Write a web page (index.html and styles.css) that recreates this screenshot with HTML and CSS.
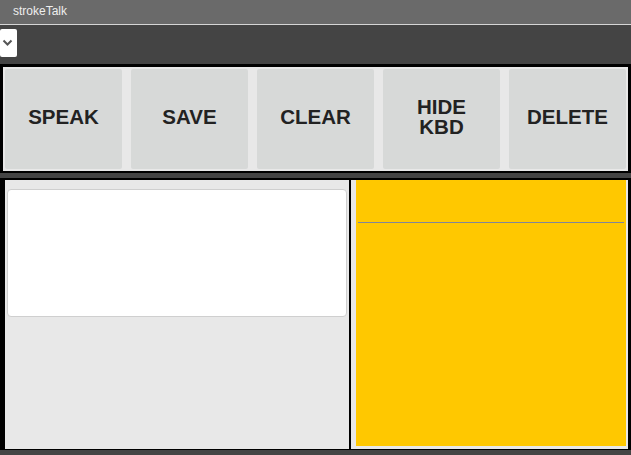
FILE: index.html
```html
<!DOCTYPE html>
<html>
<head>
<meta charset="utf-8">
<title>strokeTalk</title>
<link rel="stylesheet" href="styles.css">
</head>
<body>
<div class="app">
  <div class="titlebar">strokeTalk</div>
  <div class="toolbar">
    <div class="select">
      <svg width="17" height="28" viewBox="0 0 17 28"><polyline points="3.5,11.5 7.5,15.5 11.5,11.5" fill="none" stroke="#555" stroke-width="2"/></svg>
    </div>
  </div>
  <div class="btnpanel">
    <div class="btn">SPEAK</div>
    <div class="btn">SAVE</div>
    <div class="btn">CLEAR</div>
    <div class="btn">HIDE<br>KBD</div>
    <div class="btn">DELETE</div>
  </div>
  <div class="work">
    <div class="left">
      <div class="textbox"></div>
    </div>
    <div class="right">
      <div class="canvas">
        <div class="rule"></div>
      </div>
    </div>
  </div>
</div>
</body>
</html>
```
FILE: styles.css
```css
html, body {
  margin: 0;
  padding: 0;
}
body {
  background: #444444;
  width: 631px;
  height: 455px;
  overflow: hidden;
  font-family: "Liberation Sans", Arial, sans-serif;
}
.app {
  display: flex;
  flex-direction: column;
  width: 631px;
}
.titlebar {
  height: 24px;
  line-height: 22px;
  background: #6a6a6a;
  color: #eeeeee;
  font-size: 12px;
  padding-left: 13px;
  border-bottom: 1px solid #d6d6d6;
}
.toolbar {
  height: 39px;
  padding-top: 4px;
  box-sizing: border-box;
  display: flex;
}
.select {
  width: 17px;
  height: 28px;
  background: #ffffff;
  border-radius: 2px;
  display: flex;
}
.btnpanel {
  display: flex;
  gap: 9px;
  background: #e8e8e8;
  border: 3px solid #000;
  border-bottom-width: 2px;
  padding: 2px;
}
.btn {
  width: 117px;
  height: 100px;
  box-sizing: border-box;
  padding-bottom: 4px;
  background: #d7d9d8;
  border-radius: 2px;
  display: flex;
  align-items: center;
  justify-content: center;
  text-align: center;
  font-weight: bold;
  font-size: 20.5px;
  line-height: 1;
  color: #222222;
}
.work {
  margin-top: 5px;
  height: 272px;
  box-sizing: border-box;
  background: #000;
  padding: 2px 3px 1px 5px;
  display: flex;
  gap: 2px;
}
.left {
  width: 344px;
  background: #e8e8e8;
  padding: 9px 2px;
  box-sizing: border-box;
}
.textbox {
  height: 128px;
  box-sizing: border-box;
  background: #fff;
  border: 1px solid #cfcfcf;
  border-radius: 4px;
}
.right {
  width: 277px;
  background: #e8e8e8;
  padding: 0 2px 3px 5px;
  box-sizing: border-box;
  display: flex;
}
.canvas {
  flex: 1;
  background: #ffc800;
  padding-top: 42px;
  box-sizing: border-box;
}
.rule {
  height: 1px;
  margin: 0 2px;
  background: #80869a;
}
```
